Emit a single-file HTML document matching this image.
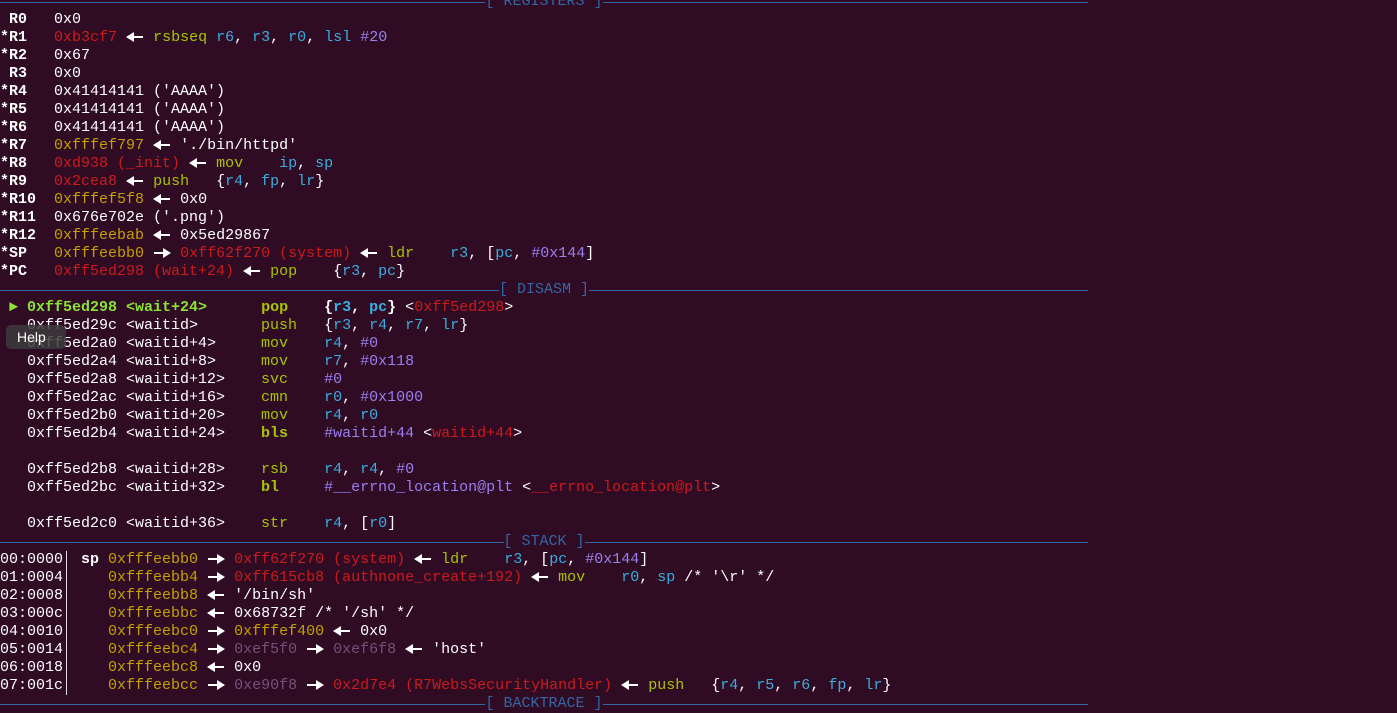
<!DOCTYPE html>
<html><head><meta charset="utf-8"><style>
html,body{margin:0;padding:0;background:#2f0b24;width:1397px;height:710px;overflow:hidden}
#t{position:absolute;left:0;top:-7px;font-family:"Liberation Mono","DejaVu Sans Mono",monospace;font-size:15px;line-height:18px;color:#fff}
.l{height:18px;white-space:pre}
.h{display:flex;width:1088px;align-items:center;color:#3465a4}
.h i{flex:1;height:1px;background:#3465a4;font-style:normal}
.r{color:#cc1b1b}.y{color:#c4a000}.g{color:#a6c400}.c{color:#3aaee0}.p{color:#9b7ff0}.m{color:#74517a}.b{font-weight:bold}.lg{color:#8ae234;font-weight:bold}
.a,.f{position:relative;display:inline-block;width:18px;height:10px;vertical-align:-1px}
.a::before,.f::before{content:"";position:absolute;top:4px;height:2px;background:#fff;left:6px;right:1px}
.a::after{content:"";position:absolute;left:0;top:0;border-right:8px solid #fff;border-top:5px solid transparent;border-bottom:5px solid transparent}
.f::before{left:1px;right:6px}
.f::after{content:"";position:absolute;right:0;top:0;border-left:8px solid #fff;border-top:5px solid transparent;border-bottom:5px solid transparent}
.bar{position:absolute;left:66px;top:551px;width:1px;height:144px;background:#ddd}
#help{position:absolute;left:6px;top:325px;width:60px;height:24px;border-radius:5px;background:rgba(60,60,60,.85);color:#fff;font-family:"Liberation Sans",sans-serif;font-size:14px;line-height:24px;text-indent:11px}
</style></head><body>
<div id="t"><div class="l h"><i></i>[ REGISTERS ]<i></i></div><div class="l"><b> R0</b>   0x0</div><div class="l"><b>*R1</b>   <span class="r">0xb3cf7</span> <span class="a"></span> <span class="g">rsbseq</span> <span class="c">r6</span>, <span class="c">r3</span>, <span class="c">r0</span>, <span class="c">lsl</span> <span class="p">#20</span></div><div class="l"><b>*R2</b>   0x67</div><div class="l"><b> R3</b>   0x0</div><div class="l"><b>*R4</b>   0x41414141 ('AAAA')</div><div class="l"><b>*R5</b>   0x41414141 ('AAAA')</div><div class="l"><b>*R6</b>   0x41414141 ('AAAA')</div><div class="l"><b>*R7</b>   <span class="y">0xfffef797</span> <span class="a"></span> './bin/httpd'</div><div class="l"><b>*R8</b>   <span class="r">0xd938 (_init)</span> <span class="a"></span> <span class="g">mov</span>    <span class="c">ip</span>, <span class="c">sp</span></div><div class="l"><b>*R9</b>   <span class="r">0x2cea8</span> <span class="a"></span> <span class="g">push</span>   {<span class="c">r4</span>, <span class="c">fp</span>, <span class="c">lr</span>}</div><div class="l"><b>*R10</b>  <span class="y">0xfffef5f8</span> <span class="a"></span> 0x0</div><div class="l"><b>*R11</b>  0x676e702e ('.png')</div><div class="l"><b>*R12</b>  <span class="y">0xfffeebab</span> <span class="a"></span> 0x5ed29867</div><div class="l"><b>*SP</b>   <span class="y">0xfffeebb0</span> <span class="f"></span> <span class="r">0xff62f270 (system)</span> <span class="a"></span> <span class="g">ldr</span>    <span class="c">r3</span>, [<span class="c">pc</span>, <span class="p">#0x144</span>]</div><div class="l"><b>*PC</b>   <span class="r">0xff5ed298 (wait+24)</span> <span class="a"></span> <span class="g">pop</span>    {<span class="c">r3</span>, <span class="c">pc</span>}</div><div class="l h"><i></i>[ DISASM ]<i></i></div><div class="l"> <span class="lg">► 0xff5ed298 &lt;wait+24&gt;      </span><span class="g b">pop</span>    <b>{<span class="c">r3</span>, <span class="c">pc</span>}</b> &lt;<span class="r">0xff5ed298</span>&gt;</div><div class="l">   0xff5ed29c &lt;waitid&gt;       <span class="g">push</span>   {<span class="c">r3</span>, <span class="c">r4</span>, <span class="c">r7</span>, <span class="c">lr</span>}</div><div class="l">   0xff5ed2a0 &lt;waitid+4&gt;     <span class="g">mov</span>    <span class="c">r4</span>, <span class="p">#0</span></div><div class="l">   0xff5ed2a4 &lt;waitid+8&gt;     <span class="g">mov</span>    <span class="c">r7</span>, <span class="p">#0x118</span></div><div class="l">   0xff5ed2a8 &lt;waitid+12&gt;    <span class="g">svc</span>    <span class="p">#0</span></div><div class="l">   0xff5ed2ac &lt;waitid+16&gt;    <span class="g">cmn</span>    <span class="c">r0</span>, <span class="p">#0x1000</span></div><div class="l">   0xff5ed2b0 &lt;waitid+20&gt;    <span class="g">mov</span>    <span class="c">r4</span>, <span class="c">r0</span></div><div class="l">   0xff5ed2b4 &lt;waitid+24&gt;    <span class="g b">bls</span>    <span class="p">#waitid+44</span> &lt;<span class="r">waitid+44</span>&gt;</div><div class="l"> </div><div class="l">   0xff5ed2b8 &lt;waitid+28&gt;    <span class="g">rsb</span>    <span class="c">r4</span>, <span class="c">r4</span>, <span class="p">#0</span></div><div class="l">   0xff5ed2bc &lt;waitid+32&gt;    <span class="g b">bl</span>     <span class="p">#__errno_location@plt</span> &lt;<span class="r">__errno_location@plt</span>&gt;</div><div class="l"> </div><div class="l">   0xff5ed2c0 &lt;waitid+36&gt;    <span class="g">str</span>    <span class="c">r4</span>, [<span class="c">r0</span>]</div><div class="l h"><i></i>[ STACK ]<i></i></div><div class="l">00:0000  <b>sp</b> <span class="y">0xfffeebb0</span> <span class="f"></span> <span class="r">0xff62f270 (system)</span> <span class="a"></span> <span class="g">ldr</span>    <span class="c">r3</span>, [<span class="c">pc</span>, <span class="p">#0x144</span>]</div><div class="l">01:0004     <span class="y">0xfffeebb4</span> <span class="f"></span> <span class="r">0xff615cb8 (authnone_create+192)</span> <span class="a"></span> <span class="g">mov</span>    <span class="c">r0</span>, <span class="c">sp</span> /* '\r' */</div><div class="l">02:0008     <span class="y">0xfffeebb8</span> <span class="a"></span> '/bin/sh'</div><div class="l">03:000c     <span class="y">0xfffeebbc</span> <span class="a"></span> 0x68732f /* '/sh' */</div><div class="l">04:0010     <span class="y">0xfffeebc0</span> <span class="f"></span> <span class="y">0xfffef400</span> <span class="a"></span> 0x0</div><div class="l">05:0014     <span class="y">0xfffeebc4</span> <span class="f"></span> <span class="m">0xef5f0</span> <span class="f"></span> <span class="m">0xef6f8</span> <span class="a"></span> 'host'</div><div class="l">06:0018     <span class="y">0xfffeebc8</span> <span class="a"></span> 0x0</div><div class="l">07:001c     <span class="y">0xfffeebcc</span> <span class="f"></span> <span class="m">0xe90f8</span> <span class="f"></span> <span class="r">0x2d7e4 (R7WebsSecurityHandler)</span> <span class="a"></span> <span class="g">push</span>   {<span class="c">r4</span>, <span class="c">r5</span>, <span class="c">r6</span>, <span class="c">fp</span>, <span class="c">lr</span>}</div><div class="l h"><i></i>[ BACKTRACE ]<i></i></div></div>
<div class="bar"></div>
<div id="help">Help</div>
</body></html>
